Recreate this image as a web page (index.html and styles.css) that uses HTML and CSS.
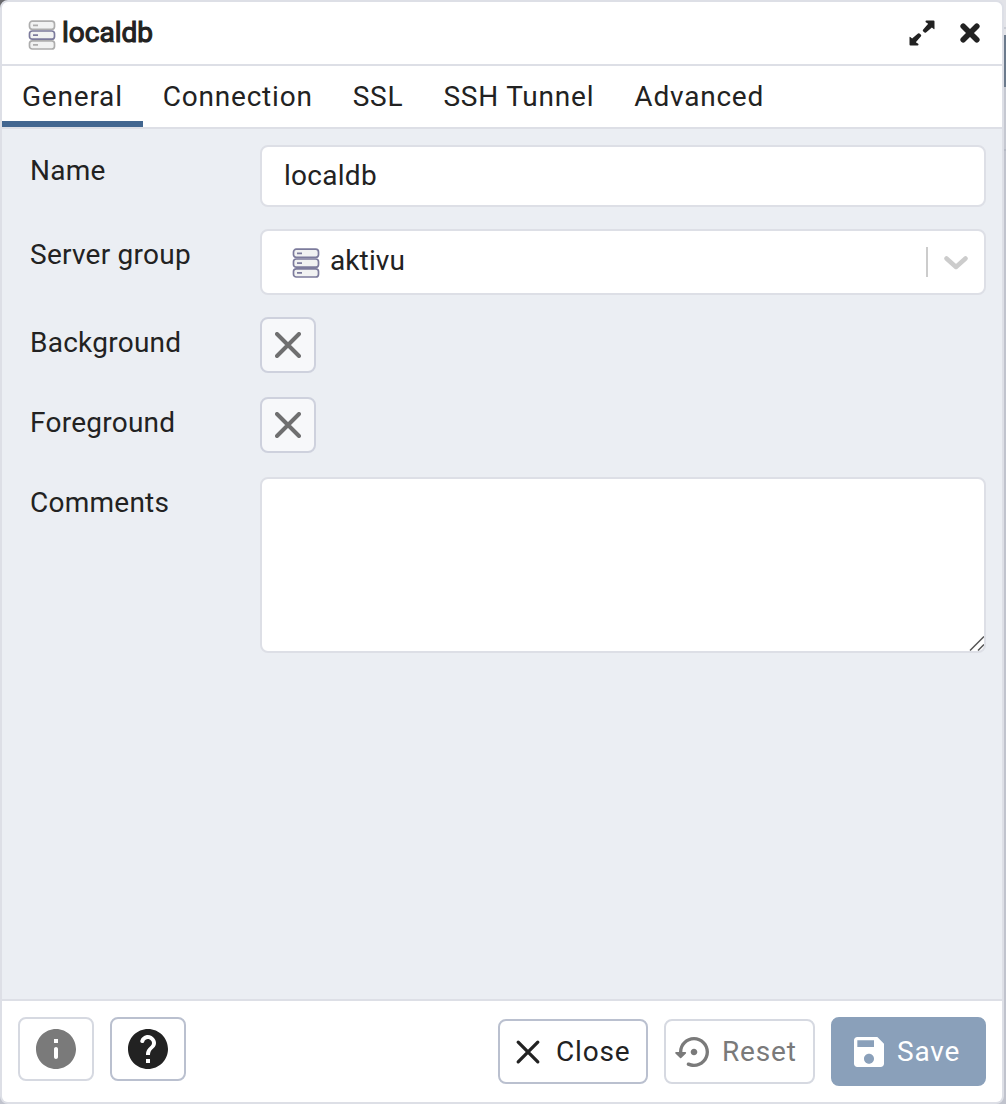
FILE: index.html
```html
<!DOCTYPE html>
<html lang="en">
<head>
<meta charset="utf-8">
<title>localdb</title>
<link rel="stylesheet" href="styles.css">
</head>
<body>
<svg class="defs" aria-hidden="true">
  <symbol id="server" viewBox="0 0 28 30">
    <g fill="#f1f2f2" stroke-width="1.7">
      <rect class="edge" x="1.5" y="1.200" width="25" height="8.200" rx="2.800"/>
      <rect class="edge" x="1.5" y="20.800" width="25" height="8.200" rx="2.800"/>
      <rect class="mid" x="1.5" y="11" width="25" height="8.200" rx="2.800"/>
      <path class="edge" d="M5 5.300h5M5 24.900h5"/>
      <path class="mid" d="M5 15.100h5"/>
    </g>
  </symbol>
</svg>
<div class="page">
  <main class="dialog">
    <header class="titlebar">
      <svg class="server muted"><use href="#server"/></svg>
      <h1>localdb</h1>
      <svg class="expand" viewBox="0 0 26 26"><path d="M16.500 1.500q0-1 1-1h7q1 0 1 1V8.600q0 1-.8.400L22.900 7.400 17 12.400q-1 .8-1.900-.1l-1-1q-.8-.9.100-1.900l5-5.700L16.800 2.200q-.3-.3-.3-.7zM9.500 24.500q0 1-1 1H1.500q-1 0-1-1V17.400q0-1 .8-.4L3.100 18.600 9 13.600q1-.8 1.900.1l1 1q.8.900-.1 1.900l-5 5.700L9.200 23.800q.3.300.3.700z"/></svg>
      <svg class="dismiss" viewBox="0 0 20 20"><path d="M3.200 3.200l13.600 13.600M16.800 3.200L3.200 16.800"/></svg>
    </header>
    <nav class="tabs">
      <a class="tab active">General</a><a class="tab">Connection</a><a class="tab">SSL</a><a class="tab">SSH Tunnel</a><a class="tab">Advanced</a>
    </nav>
    <section class="form">
      <div class="row"><label>Name</label><div class="field name">localdb</div></div>
      <div class="row"><label>Server group</label>
        <div class="field select">
          <svg class="server"><use href="#server"/></svg><span class="value">aktivu</span>
          <i class="divider"></i>
          <svg class="chevron" viewBox="0 0 24 16"><path d="M2.500 3.500L12 12l9.500-8.500"/></svg>
        </div>
      </div>
      <div class="row pick"><label>Background</label><div class="swatch"><svg viewBox="0 0 26 26"><path d="M2 2l22 22M24 2L2 24"/></svg></div></div>
      <div class="row pick"><label>Foreground</label><div class="swatch"><svg viewBox="0 0 26 26"><path d="M2 2l22 22M24 2L2 24"/></svg></div></div>
      <div class="row"><label>Comments</label><div class="field comments"><svg class="grip" viewBox="0 0 16 16"><path d="M2 15.500L16 1.500M10 15.500L16 9.500"/></svg></div></div>
    </section>
    <footer class="actions">
      <a class="btn icon disabled"><svg viewBox="0 0 24 24"><path d="M12 2C6.480 2 2 6.480 2 12s4.480 10 10 10 10-4.480 10-10S17.520 2 12 2zm0 15c-.55 0-1-.45-1-1v-4c0-.55.45-1 1-1s1 .45 1 1v4c0 .55-.45 1-1 1zm1-8h-2V7h2v2z"/></svg></a>
      <a class="btn icon"><svg viewBox="0 0 24 24"><path d="M12 2C6.480 2 2 6.480 2 12s4.480 10 10 10 10-4.480 10-10S17.520 2 12 2zm1 17h-2v-2h2v2zm2.070-7.750l-.9.920c-.5.510-.86.970-1.040 1.690-.08.320-.13.680-.13 1.140h-2v-.5c0-.46.080-.9.220-1.310.2-.58.530-1.100.950-1.520l1.240-1.260c.46-.44.680-1.100.550-1.800-.13-.72-.69-1.330-1.390-1.530-1.110-.31-2.140.320-2.470 1.270-.12.370-.43.650-.82.650h-.3C8.400 9 8 8.440 8.160 7.880c.43-1.470 1.680-2.590 3.230-2.830 1.520-.24 2.970.550 3.870 1.800 1.180 1.630.830 3.380-.19 4.400z"/></svg></a>
      <a class="btn text close"><svg class="cross" viewBox="0 0 40 40"><path d="M10.200 10.200l19.600 19.600M29.800 10.200L10.200 29.800"/></svg>Close</a>
      <a class="btn text disabled reset"><svg viewBox="0 0 24 24"><path d="M14 12c0-1.100-.9-2-2-2s-2 .9-2 2 .9 2 2 2 2-.9 2-2zm-2-9c-4.970 0-9 4.030-9 9H1.210c-.45 0-.67.540-.35.850l2.790 2.790c.2.200.510.200.710 0l2.790-2.790c.31-.31.090-.85-.36-.85H5c0-3.870 3.130-7 7-7s7 3.130 7 7-3.130 7-7 7c-1.060 0-2.060-.24-2.960-.66-.38-.17-.83-.1-1.130.200-.5.500-.370 1.350.270 1.640C9.340 20.710 10.640 21 12 21c4.970 0 9-4.030 9-9s-4.030-9-9-9z"/></svg>Reset</a>
      <a class="btn text save"><svg viewBox="0 0 24 24"><path d="M17 3H5c-1.110 0-2 .9-2 2v14c0 1.100.890 2 2 2h14c1.100 0 2-.9 2-2V7l-4-4zm-5 16c-1.660 0-3-1.340-3-3s1.340-3 3-3 3 1.340 3 3-1.340 3-3 3zm3-10H5V5h10v4z"/></svg>Save</a>
    </footer>
  </main>
</div>
</body>
</html>
```
FILE: styles.css
```css
* { box-sizing: border-box; }
body {
  margin: 0;
  font-family: Roboto, "Liberation Sans", sans-serif;
  font-size: 28px;
  color: #222;
}
svg { display: block; flex: none; }
.defs { position: absolute; width: 0; height: 0; }

.page {
  width: 1006px;
  height: 1104px;
  padding-right: 2px;
  overflow: hidden;
  background:
    linear-gradient(#68686c, #68686c) 0 0 / 8px 8px no-repeat,
    linear-gradient(#e2e3e8 0 27px, #c9ccd4 27px 29px, #e2e3e8 29px 35px, #6b7a8c 35px 87px, #c5c8d1 87px 149px, #b5b9c4 149px 151px, #c0c3cd 151px);
}
.dialog {
  display: flex;
  flex-direction: column;
  height: 1104px;
  border: 2px solid #dddfe6;
  border-radius: 8px;
  background: #ebeef3;
  overflow: hidden;
}

.titlebar {
  display: flex;
  align-items: center;
  height: 64px;
  padding: 0 22px 1px 26px;
  border-bottom: 2px solid #dddfe6;
  background: #fff;
}
.titlebar h1 {
  flex: 1;
  margin: 0 0 1px 6px;
  font-size: 28px;
  font-weight: 400;
  letter-spacing: 0;
  -webkit-text-stroke: 1.1px #222;
}
.server { width: 28px; height: 30px; --edge: #7c7b9c; --mid: #7c7b9c; }
.server.muted { margin-top: 4px; --edge: #adadad; --mid: #7c7b9c; }
.edge { stroke: var(--edge); }
.mid { stroke: var(--mid); }
.expand { width: 26px; height: 26px; margin-right: 25px; fill: #222; }
.dismiss { width: 20px; height: 20px; fill: none; stroke: #222; stroke-width: 5.6; stroke-linecap: round; }

.tabs {
  display: flex;
  height: 63px;
  border-bottom: 2px solid #dddfe6;
  background: #fff;
}
.tab {
  padding: 0 20px;
  line-height: 61px;
  letter-spacing: .79px;
  white-space: nowrap;
}
.tab.active { box-shadow: inset 0 -6px #426690; }

.form { flex: 1; padding: 16px 16px 0 28px; }
.row { display: flex; margin-bottom: 22px; }
.row.pick { margin-bottom: 24px; }
.row label { width: 230px; line-height: 52px; letter-spacing: .25px; }
.field {
  flex: 1;
  display: flex;
  align-items: center;
  border: 2px solid #dddfe6;
  border-radius: 8px;
  background: #fff;
  letter-spacing: .27px;
}
.name { height: 62px; padding: 0 22px 2px; }
.select { height: 66px; padding: 0 16px 0 30px; letter-spacing: .1px; }
.select .server { margin-top: 1px; }
.select .value { flex: 1; padding: 0 0 3px 10px; }
.divider { width: 2px; height: 30px; margin: 0 16px 0 0; background: #ccc; }
.chevron { width: 24px; height: 16px; margin-top: 2px; fill: none; stroke: #ccc; stroke-width: 4.5; stroke-linecap: round; stroke-linejoin: round; }
.swatch {
  display: flex;
  align-items: center;
  justify-content: center;
  width: 56px;
  height: 56px;
  border: 2px solid #ced1dd;
  border-radius: 8px;
  background: #f7f8fa;
}
.swatch svg { width: 26px; height: 26px; fill: none; stroke: #6f6f70; stroke-width: 4; stroke-linecap: round; }
.comments { height: 176px; align-items: flex-end; justify-content: flex-end; }
.grip { width: 16px; height: 16px; fill: none; stroke: #555; stroke-width: 1.5; }

.actions {
  display: flex;
  align-items: flex-start;
  gap: 16px;
  height: 103px;
  padding: 16px;
  border-top: 2px solid #dddfe6;
  background: #fff;
}
.btn {
  display: flex;
  align-items: center;
  border: 2px solid #bac0cf;
  border-radius: 8px;
  letter-spacing: .84px;
  fill: currentColor;
  white-space: nowrap;
}
.btn.disabled { border-color: #d6d9e1; color: #7a7a7a; }
.icon { width: 76px; height: 64px; justify-content: center; }
.icon svg { width: 48px; height: 48px; }
.text { height: 65px; margin-top: 2px; }
.text svg { width: 40px; height: 40px; margin-right: 8px; }
.close { width: 150px; margin-left: auto; padding-left: 8px; }
.cross { fill: none; stroke: #222; stroke-width: 3.3; stroke-linecap: round; }
.reset { width: 151px; padding-left: 8px; }
.save { width: 155px; height: 69px; margin-top: 0; padding-left: 16px; border-color: #8aa0ba; background: #8aa0ba; color: #fff; }
```
